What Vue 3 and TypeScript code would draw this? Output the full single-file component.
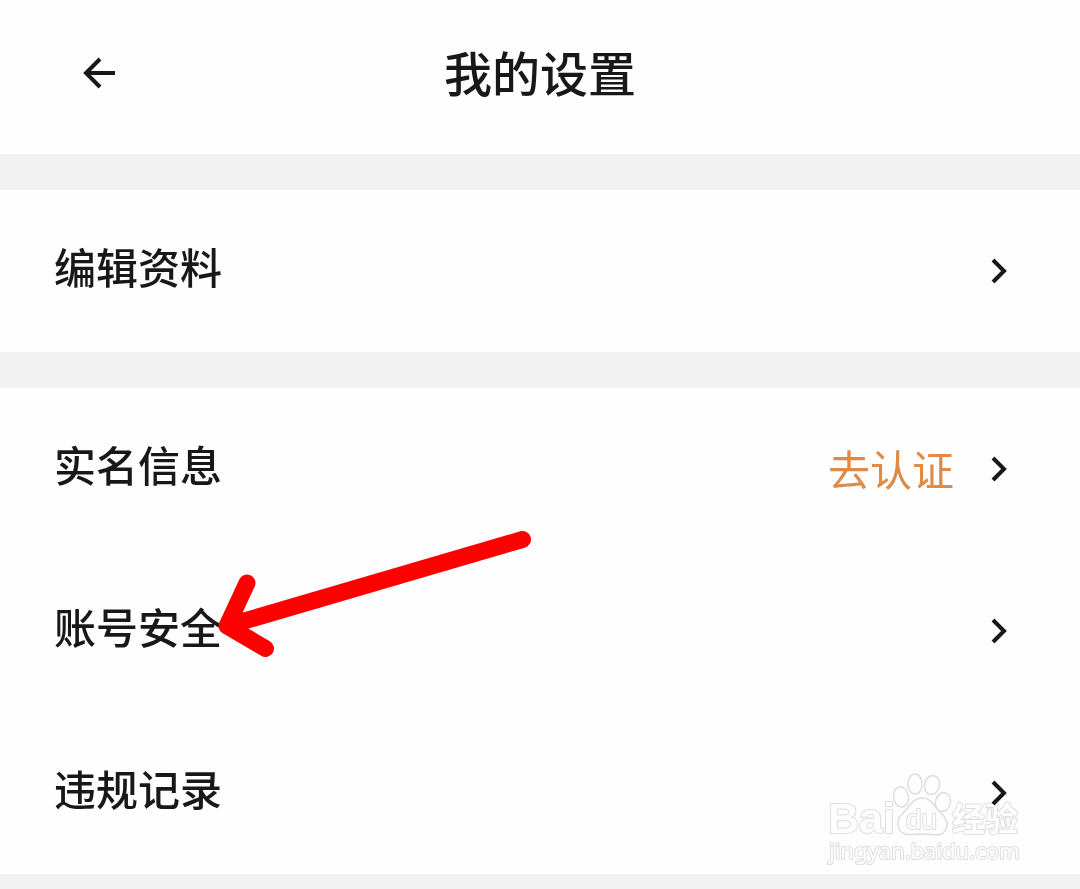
<script setup lang="ts">
interface SettingItem {
  label: string
  action?: string
  marked?: boolean
}

const groups: SettingItem[][] = [
  [{ label: '编辑资料' }],
  [
    { label: '实名信息', action: '去认证' },
    { label: '账号安全', marked: true },
    { label: '违规记录' },
  ],
]
</script>

<template>
  <div class="page">
    <header class="header">
      <button class="back" type="button" aria-label="返回">
        <svg width="36" height="36" viewBox="0 0 36 36" aria-hidden="true">
          <path d="M20 4 L6 18 L20 32 M6 18 H35" />
        </svg>
      </button>
      <h1 class="title">我的设置</h1>
    </header>

    <main class="groups">
      <ul v-for="(group, index) in groups" :key="index" class="group">
        <li v-for="item in group" :key="item.label" class="item">
          <button class="row" type="button">
            <span class="label">{{ item.label }}</span>
            <span v-if="item.action" class="action">{{ item.action }}</span>
            <svg class="chevron" width="18" height="28" viewBox="0 0 18 28" aria-hidden="true">
              <path d="M3 3 L14 14 L3 25" />
            </svg>
          </button>
          <svg v-if="item.marked" class="pointer" width="320" height="132" viewBox="0 0 320 132" aria-hidden="true">
            <path d="M307.500 11.500 L12 98 M32 55 L12 98 L50.500 120.500" />
          </svg>
        </li>
      </ul>
    </main>

    <svg class="watermark" width="204" height="104" viewBox="0 0 204 104" role="img" aria-label="Baidu经验">
      <g class="paw">
        <ellipse cx="79" cy="27" rx="7.500" ry="10" transform="rotate(-8 79 27)" />
        <ellipse cx="93" cy="14" rx="7" ry="10" />
        <ellipse cx="110" cy="15" rx="7.500" ry="9.500" transform="rotate(12 110 15)" />
        <ellipse cx="121" cy="32" rx="7.500" ry="9.500" transform="rotate(12 121 32)" />
        <path d="M100 28 C90 28 87 38 81 43 C76 48 74 53 77 59 C81 67 90 64 100 64 C111 64 120 68 124 59 C127 52 123 47 118 42 C112 37 110 28 100 28 Z" />
      </g>
      <text class="brand" x="6" y="63">Bai</text>
      <text class="du" x="84" y="59">du</text>
      <text class="product" x="130" y="61">经验</text>
      <text class="site" x="7" y="89">jingyan.baidu.com</text>
    </svg>
  </div>
</template>

<style>
body {
  margin: 0;
  background: #f1f1f1;
}
</style>

<style scoped>
.page {
  position: relative;
  font-family: "Noto Sans CJK SC", "Liberation Sans", sans-serif;
  font-weight: 500;
  color: #18181a;
}

.header {
  display: grid;
  grid-template-columns: 36px 1fr 36px;
  align-items: center;
  height: 154px;
  padding: 0 80px;
  box-sizing: border-box;
  background: #fefefe;
}

.back {
  display: flex;
  padding: 0;
  border: 0;
  background: none;
  color: inherit;
  margin-bottom: 8px;
  cursor: pointer;
}

.back path,
.chevron path {
  fill: none;
  stroke: #18181a;
  stroke-width: 4;
}

.title {
  margin: 0 0 12px;
  font-size: 48px;
  line-height: 72px;
  font-weight: 500;
  text-align: center;
}

.groups {
  display: flex;
  flex-direction: column;
  gap: 36px;
  padding-top: 36px;
}

.group {
  margin: 0;
  padding: 0;
  list-style: none;
  background: #fefefe;
}

.item {
  position: relative;
}

.row {
  display: flex;
  align-items: center;
  width: 100%;
  height: 162px;
  padding: 0 72px 0 54px;
  border: 0;
  background: none;
  font: inherit;
  font-size: 42px;
  line-height: 60px;
  color: inherit;
  text-align: left;
  cursor: pointer;
}

.label {
  flex: 1;
  padding-bottom: 10px;
}

.action {
  margin-right: 36px;
  padding-bottom: 2px;
  font-weight: 400;
  color: #df8b47;
}

.pointer {
  position: absolute;
  left: 215px;
  top: -22px;
  pointer-events: none;
}

.pointer path {
  fill: none;
  stroke: #fe0000;
  stroke-width: 17;
  stroke-linecap: round;
  stroke-linejoin: round;
}

.watermark {
  position: absolute;
  right: 54px;
  bottom: 0;
  mix-blend-mode: multiply;
  pointer-events: none;
}

.paw {
  fill: none;
  stroke: #dedede;
  stroke-width: 1.500;
}

.watermark text {
  fill: #fff;
  stroke: #dedede;
  stroke-width: 2;
  stroke-linejoin: round;
  paint-order: stroke;
  font-family: "Liberation Sans", "Noto Sans CJK SC", sans-serif;
}

.watermark .brand {
  font-size: 43px;
  font-weight: 700;
}

.watermark .du {
  font-size: 28px;
  font-weight: 400;
}

.watermark .product {
  font-family: "Noto Sans CJK SC", sans-serif;
  font-size: 33px;
  font-weight: 700;
}

.watermark .site {
  font-family: "Noto Sans", sans-serif;
  font-size: 22px;
  font-weight: 400;
}
</style>
